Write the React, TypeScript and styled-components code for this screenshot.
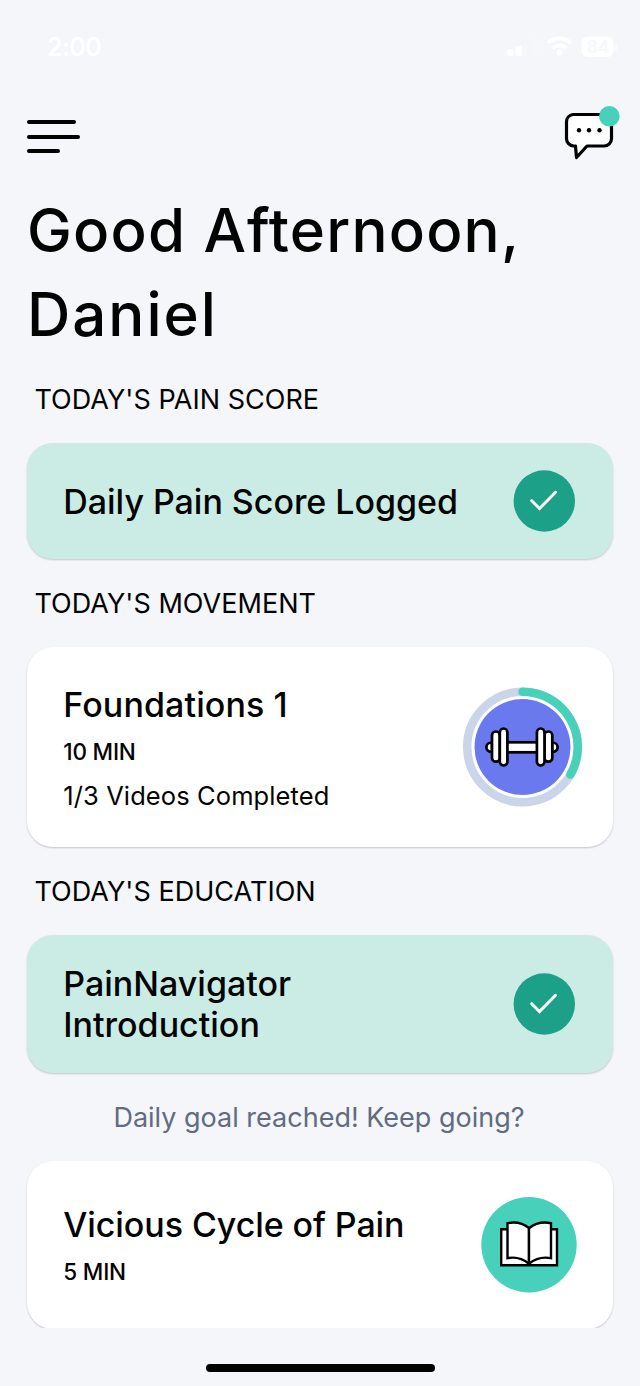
import React from "react";
import styled, { createGlobalStyle } from "styled-components";

const GlobalStyle = createGlobalStyle`
  * { box-sizing: border-box; }
  body { margin: 0; background: #f4f6fa; }
`;

const Screen = styled.div`
  width: 640px;
  height: 1386px;
  background: #f4f6fa;
  color: #020403;
  font-family: Inter, "Liberation Sans", sans-serif;
  display: flex;
  flex-direction: column;
  overflow: hidden;
`;

const StatusBar = styled.div`
  height: 94px;
  padding: 0 22px 0 47px;
  display: flex;
  align-items: center;
  justify-content: space-between;
  flex: none;
`;

const Clock = styled.span`
  color: #fff;
  font-size: 25px;
  font-weight: 600;
  letter-spacing: -0.6px;
`;

const Header = styled.header`
  height: 93px;
  padding: 12px 20px 0 27px;
  display: flex;
  justify-content: space-between;
  flex: none;
`;

const MenuButton = styled.button`
  border: 0;
  background: none;
  padding: 14px 0 0;
  width: 53px;
  height: 50px;
  display: flex;
  flex-direction: column;
  gap: 10.6px;
`;

const MenuLine = styled.span<{ $width: number }>`
  width: ${(p) => p.$width}px;
  height: 4px;
  border-radius: 2px;
  background: #000;
  flex: none;
`;

const Content = styled.main`
  height: 1141px;
  padding: 0 27px;
  overflow: hidden;
  flex: none;
`;

const Greeting = styled.h1`
  margin: 0;
  padding-top: 1px;
  height: 189px;
  font-size: 60px;
  line-height: 84px;
  font-weight: 500;
  white-space: nowrap;
`;

const GreetingLine = styled.span<{ $tracking: number }>`
  display: block;
  letter-spacing: ${(p) => p.$tracking}px;
`;

const SectionTitle = styled.h2<{ $first?: boolean }>`
  margin: 0;
  padding: ${(p) => (p.$first ? 7 : 28)}px 0 0 7.4px;
  height: ${(p) => (p.$first ? 67 : 88)}px;
  font-size: 27px;
  line-height: 34px;
  font-weight: 400;
  letter-spacing: 0.03px;
`;

const Card = styled.section<{ $height: number; $done?: boolean; $right?: number }>`
  height: ${(p) => p.$height}px;
  padding: 0 ${(p) => p.$right ?? 38}px 0 36.3px;
  border-radius: 26px;
  background: ${(p) => (p.$done ? "#cbece5" : "#fff")};
  box-shadow: 0 1px 2px rgba(0, 0, 0, 0.2);
  display: flex;
  align-items: center;
  justify-content: space-between;
`;

const CardText = styled.div`
  display: flex;
  flex-direction: column;
`;

const CardTitle = styled.h3<{ $tracking?: number }>`
  margin: 0;
  font-size: 34px;
  line-height: 41px;
  font-weight: 500;
  letter-spacing: ${(p) => p.$tracking ?? 0}px;
`;

const Duration = styled.span`
  margin-top: 13px;
  font-size: 22.5px;
  line-height: 28px;
  font-weight: 500;
  letter-spacing: -0.2px;
`;

const Progress = styled.span`
  margin-top: 14px;
  margin-bottom: -2px;
  font-size: 25.5px;
  line-height: 32px;
  letter-spacing: 0.1px;
`;

const Goal = styled.p`
  margin: 0;
  padding: 1px 2px 0 0;
  height: 88px;
  line-height: 88px;
  text-align: center;
  font-size: 27px;
  color: #626b80;
`;

const HomeIndicator = styled.div`
  width: 229px;
  height: 8px;
  margin: 36px 0 0 206px;
  border-radius: 4px;
  background: #000;
  flex: none;
`;

const StatusIcons = () => (
  <svg width="111" height="26" viewBox="507 34 111 26">
    <g fill="#fff">
      <rect x="507.500" y="49" width="6.500" height="7" rx="2" />
      <rect x="515.500" y="46" width="6.500" height="10" rx="2" />
      <rect x="524" y="42" width="5" height="14" rx="2" opacity=".12" />
      <rect x="532" y="38" width="5" height="18" rx="2" opacity=".12" />
      <circle cx="559.500" cy="52.500" r="3" />
      <rect x="581.500" y="36.500" width="32" height="20.500" rx="6" />
      <rect x="615" y="43" width="2" height="8" rx="1" opacity=".5" />
    </g>
    <path d="M548 43q11.500-9 23 0M552.500 48q7-5 14 0" fill="none" stroke="#fff" strokeWidth="4" />
    <text x="598" y="53" textAnchor="middle" fontFamily="Inter, sans-serif" fontSize="17" fontWeight="700" fill="#f6f8fb">84</text>
  </svg>
);

const ChatIcon = () => (
  <svg width="56" height="56" viewBox="564 106 56 56">
    <path
      d="M573 114.500H604a7.500 7.500 0 0 1 7.500 7.500V138.500a7.500 7.500 0 0 1-7.500 7.500H587L576.500 157.500L575.500 146H573.500a7.500 7.500 0 0 1-7-7.500V122a7.500 7.500 0 0 1 6.500-7.500Z"
      fill="#fff" stroke="#000" strokeWidth="3.200" strokeLinejoin="round"
    />
    <circle cx="579" cy="130.300" r="2.200" />
    <circle cx="589" cy="130.300" r="2.200" />
    <circle cx="599.500" cy="130.300" r="2.200" />
    <circle cx="609.300" cy="116.300" r="10.300" fill="#47d1bb" />
  </svg>
);

const CheckIcon = () => (
  <svg width="62" height="62" viewBox="0 0 62 62">
    <circle cx="31.300" cy="31" r="30.700" fill="#1ca088" />
    <path d="M18.700 30.700L26.500 38.500L42.500 22.300" fill="none" stroke="#fff" strokeWidth="3" strokeLinecap="round" />
  </svg>
);

const DumbbellIcon = () => (
  <svg width="120" height="120" viewBox="0 0 120 120">
    <circle cx="60.500" cy="60" r="55.300" fill="none" stroke="#cad5e9" strokeWidth="8.500" />
    <path d="M60.500 4.700A55.300 55.300 0 0 1 108.400 87.600" fill="none" stroke="#47d1bb" strokeWidth="8.500" strokeLinecap="round" />
    <circle cx="60.500" cy="60" r="48" fill="#6b79ef" />
    <g fill="#fff" stroke="#000" strokeWidth="2.700">
      <path d="M30 55.500C22.500 55.500 22.500 65 30 65ZM90 55.500C97.500 55.500 97.500 65 90 65Z" />
      <rect x="44" y="55.300" width="32" height="10" />
      <rect x="30" y="44.500" width="7.800" height="30.200" rx="3.800" />
      <rect x="82.500" y="44.500" width="7.800" height="30.200" rx="3.800" />
      <rect x="37.800" y="41.500" width="7.600" height="37" rx="3.800" />
      <rect x="74.900" y="41.500" width="7.600" height="37" rx="3.800" />
    </g>
  </svg>
);

const BookIcon = () => (
  <svg width="96" height="96" viewBox="481 1196.300 96 96">
    <circle cx="529" cy="1244" r="47.700" fill="#47d1bb" />
    <g fill="#fff" stroke="#000" strokeWidth="2.400">
      <path d="M501.200 1228.500H557V1264.500H501.200Z" />
      <path d="M507.500 1222.500Q520 1220 529 1227.500V1263Q519 1255 507.500 1257.500Z" />
      <path d="M551 1222.500Q538.500 1220 529 1227.500V1263Q539 1255 551 1257.500Z" />
    </g>
  </svg>
);

export default function App() {
  return (
    <Screen>
      <GlobalStyle />
      <StatusBar>
        <Clock>2:00</Clock>
        <StatusIcons />
      </StatusBar>
      <Header>
        <MenuButton aria-label="Menu">
          <MenuLine $width={49} />
          <MenuLine $width={53} />
          <MenuLine $width={33} />
        </MenuButton>
        <ChatIcon />
      </Header>
      <Content>
        <Greeting>
          <GreetingLine $tracking={1.2}>Good Afternoon,</GreetingLine>
          <GreetingLine $tracking={2}>Daniel</GreetingLine>
        </Greeting>
        <SectionTitle $first>TODAY'S PAIN SCORE</SectionTitle>
        <Card $height={116} $done>
          <CardTitle $tracking={-0.03}>Daily Pain Score Logged</CardTitle>
          <CheckIcon />
        </Card>
        <SectionTitle>TODAY'S MOVEMENT</SectionTitle>
        <Card $height={200} $right={31}>
          <CardText>
            <CardTitle $tracking={0.1}>Foundations 1</CardTitle>
            <Duration>10 MIN</Duration>
            <Progress>1/3 Videos Completed</Progress>
          </CardText>
          <DumbbellIcon />
        </Card>
        <SectionTitle>TODAY'S EDUCATION</SectionTitle>
        <Card $height={138} $done>
          <CardTitle>PainNavigator<br />Introduction</CardTitle>
          <CheckIcon />
        </Card>
        <Goal>Daily goal reached! Keep going?</Goal>
        <Card $height={168} $right={36}>
          <CardText>
            <CardTitle $tracking={-0.08}>Vicious Cycle of Pain</CardTitle>
            <Duration>5 MIN</Duration>
          </CardText>
          <BookIcon />
        </Card>
      </Content>
      <HomeIndicator />
    </Screen>
  );
}
